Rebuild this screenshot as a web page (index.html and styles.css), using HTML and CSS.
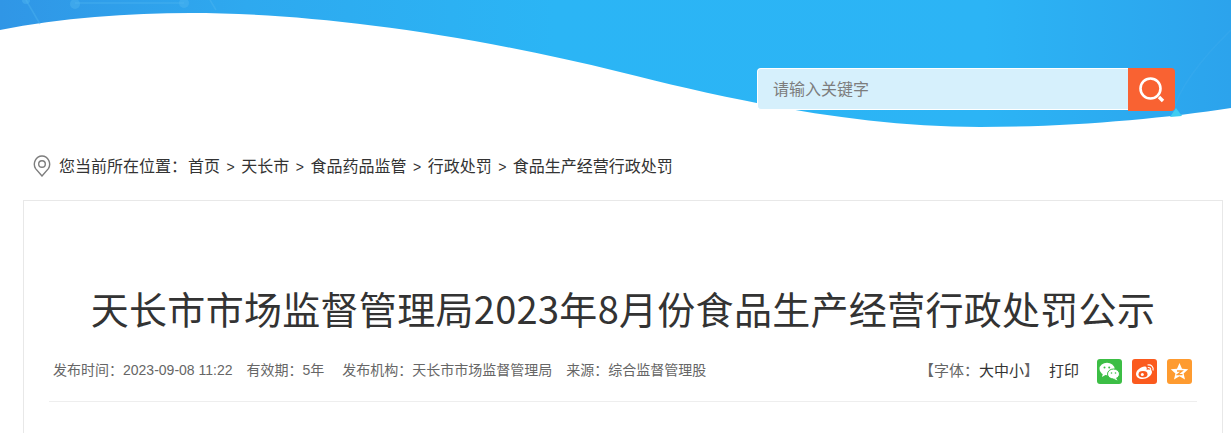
FILE: index.html
```html
<!DOCTYPE html>
<html lang="zh-CN">

<head>
    <meta charset="utf-8">
    <title>天长市市场监督管理局2023年8月份食品生产经营行政处罚公示</title>
    <link rel="stylesheet" href="styles.css">
</head>

<body>
<div class="header">
    <svg class="header-bg" width="1231" height="127" viewBox="0 0 1231 127">
        <defs>
            <linearGradient id="wave" x1="0" y1="0" x2="1" y2="0">
                <stop offset="0" stop-color="#3096e6"/>
                <stop offset="0.2" stop-color="#2ea9ef"/>
                <stop offset="0.45" stop-color="#2bb5f5"/>
                <stop offset="0.8" stop-color="#2cb4f5"/>
                <stop offset="1" stop-color="#2ca3ec"/>
            </linearGradient>
        </defs>
        <path d="M0 30C60 18 130 13 190 13C300 13 450 30 620 72C720 97 850 127 980 127C1070 127 1160 119 1231 108V0H0Z" fill="url(#wave)"/>
        <g fill="none" stroke="#4fb6f0" stroke-opacity="0.4" stroke-width="1.5">
            <path d="M26 0L40 24M75 3H184M210 0L216 10"/>
            <path d="M1231 30C1200 60 1178 90 1173 112" stroke-opacity="0.2"/>
        </g>
        <circle cx="26" cy="0" r="4" fill="#4fb6f0" fill-opacity="0.45"/>
        <circle cx="75" cy="4" r="5" fill="#4fb6f0" fill-opacity="0.45"/>
        <circle cx="184" cy="3" r="5" fill="#4fb6f0" fill-opacity="0.45"/>
        <path d="M1170 117L1176 108L1182 116Z" fill="#3fcdf2"/>
    </svg>
    <form class="search">
        <input class="search-input" type="text" placeholder="请输入关键字">
        <button class="search-btn" type="button" aria-label="搜索">
            <svg width="28" height="28" viewBox="0 0 28 28" fill="none" stroke="#fff">
                <circle cx="12.5" cy="12.5" r="10" stroke-width="2.6"/>
                <path d="M21 21L25 25" stroke-width="3.4"/>
            </svg>
        </button>
    </form>
</div>

<div class="crumbs">
    <svg class="pin" width="18" height="22" viewBox="0 0 18 22" fill="none" stroke="#7d7d7d" stroke-width="1.4">
        <path d="M9 21L2.6 13.6C-0.6 8.5 2.8 1 9 1C15.2 1 18.6 8.5 15.4 13.6Z"/>
        <circle cx="9" cy="9" r="3.3"/>
    </svg>
    <span>您当前所在位置：</span>
    <a>首页</a><i>&gt;</i>
    <a>天长市</a><i>&gt;</i>
    <a>食品药品监管</a><i>&gt;</i>
    <a>行政处罚</a><i>&gt;</i>
    <a>食品生产经营行政处罚</a>
</div>

<div class="card">
    <h1 class="title">天长市市场监督管理局2023年8月份食品生产经营行政处罚公示</h1>
    <div class="info">
        <div class="info-left">
            <span>发布时间：2023-09-08 11:22</span>
            <span>有效期：5年</span>
            <span class="org">发布机构：天长市市场监督管理局</span>
            <span>来源：综合监督管理股</span>
        </div>
        <div class="info-right">
            <span class="font-size">【字体：<a>大</a><a>中</a><a>小</a>】</span>
            <a class="print">打印</a>
            <a class="share share-wx">
                <svg width="25" height="25" viewBox="0 0 25 25" fill="#fff">
                    <ellipse cx="10" cy="10" rx="7.5" ry="6.2"/>
                    <path d="M6 14L5 18L10 15Z"/>
                    <ellipse cx="16.5" cy="15" rx="6" ry="5" stroke="#3cbe45"/>
                    <path d="M19 19L20.5 21.5L16 19.5Z"/>
                    <g fill="#3cbe45">
                        <circle cx="7.5" cy="8.5" r="1"/>
                        <circle cx="12.2" cy="8.5" r="1"/>
                        <circle cx="14.5" cy="14" r="0.8"/>
                        <circle cx="18.5" cy="14" r="0.8"/>
                    </g>
                </svg>
            </a>
            <a class="share share-wb">
                <svg width="25" height="25" viewBox="0 0 25 25" fill="none">
                    <path d="M4 15C4 11.5 9 7.5 12.5 7.5C15 7.5 15 9.5 14.6 11C17.5 10 20 10.8 20 13C20 16.5 15 20 10.5 20C7 20 4 18 4 15Z" fill="#fff"/>
                    <ellipse cx="11" cy="15.2" rx="4.5" ry="3.2" fill="#fb5a1e"/>
                    <circle cx="10.3" cy="15.5" r="1.5" fill="#fff"/>
                    <path d="M15.5 6C19 5 22 8 21 11.5M15.8 8.6C17.6 8.1 19 9.5 18.6 11" stroke="#fff" stroke-width="1.2"/>
                </svg>
            </a>
            <a class="share share-qz">
                <svg width="25" height="25" viewBox="0 0 25 25">
                    <path d="M12.5 4L15 9.8L21.2 10.3L16.6 14.4L18 20.5L12.5 17.3L7 20.5L8.4 14.4L3.8 10.3L10 9.8Z" fill="#fff"/>
                    <path d="M10 12H15L10.5 15.6H15.5" fill="none" stroke="#fe9b30" stroke-width="1.4"/>
                </svg>
            </a>
        </div>
    </div>
</div>

</body>

</html>
```
FILE: styles.css
```css
body {
    font-family: "Liberation Sans", "Noto Sans CJK SC", sans-serif;
    margin: 0;
    padding: 0;
    background-color: #fff;
    color: #333;
}

.header {
    position: relative;
    height: 127px;
}

.header-bg {
    position: absolute;
    left: 0;
    top: 0;
}

.search {
    position: relative;
    display: flex;
    box-sizing: border-box;
    width: 418px;
    height: 110px;
    margin: 0 0 0 757px;
    padding-top: 68px;
}

.search-input {
    flex: 1;
    min-width: 0;
    box-sizing: border-box;
    height: 42px;
    padding: 2px 15px 0;
    border: 1px solid #fff;
    border-right: none;
    border-radius: 4px 0 0 4px;
    background-color: #d6f0fc;
    font-family: inherit;
    font-size: 16px;
    outline: none;
}

.search-input::placeholder {
    color: #7d7d7d;
    opacity: 1;
}

.search-btn {
    display: flex;
    align-items: center;
    justify-content: center;
    width: 47px;
    height: 43px;
    padding: 0;
    border: none;
    border-radius: 0 4px 4px 0;
    background-color: #f96232;
    cursor: pointer;
}

.crumbs {
    display: flex;
    align-items: center;
    height: 22px;
    margin-top: 29px;
    margin-left: 33px;
    font-size: 16px;
    line-height: 20px;
    color: #333;
}

.pin {
    margin-right: 8px;
    margin-top: -2px;
}

.crumbs span {
    margin-right: 1px;
}

.crumbs i {
    margin: 0 6.5px;
    font-style: normal;
    font-size: 14px;
}

.card {
    box-sizing: border-box;
    width: 1200px;
    height: 233px;
    margin-top: 22px;
    margin-left: 23px;
    padding: 0 25px;
    border: 1px solid #e8e8e8;
    border-bottom: none;
}

.title {
    margin: 0;
    padding-top: 77px;
    padding-bottom: 3px;
    font-family: "Noto Sans CJK SC", sans-serif;
    font-size: 38px;
    font-weight: 400;
    letter-spacing: 0.3px;
    line-height: 60px;
    text-align: center;
    color: #333;
}

.info {
    display: flex;
    align-items: center;
    justify-content: space-between;
    height: 60px;
    border-bottom: 1px solid #eee;
    font-size: 14px;
    color: #666;
}

.info-left {
    display: flex;
    gap: 14px;
    padding-left: 4px;
    padding-bottom: 4px;
}

.info-left .org {
    margin-left: 4px;
}

.info-right {
    display: flex;
    align-items: center;
}

.font-size {
    margin-right: 10px;
    padding-bottom: 4px;
    font-size: 15px;
}

.font-size a {
    color: #333;
}

.print {
    margin-right: 18px;
    padding-bottom: 4px;
    font-size: 15px;
    color: #333;
}

.share {
    display: block;
    width: 25px;
    height: 25px;
    margin-right: 10px;
    border-radius: 3px;
}

.share svg {
    display: block;
}

.share-wx {
    background-color: #3cbe45;
}

.share-wb {
    background-color: #fb5a1e;
}

.share-qz {
    background-color: #fe9b30;
    margin-right: 5px;
}
```
